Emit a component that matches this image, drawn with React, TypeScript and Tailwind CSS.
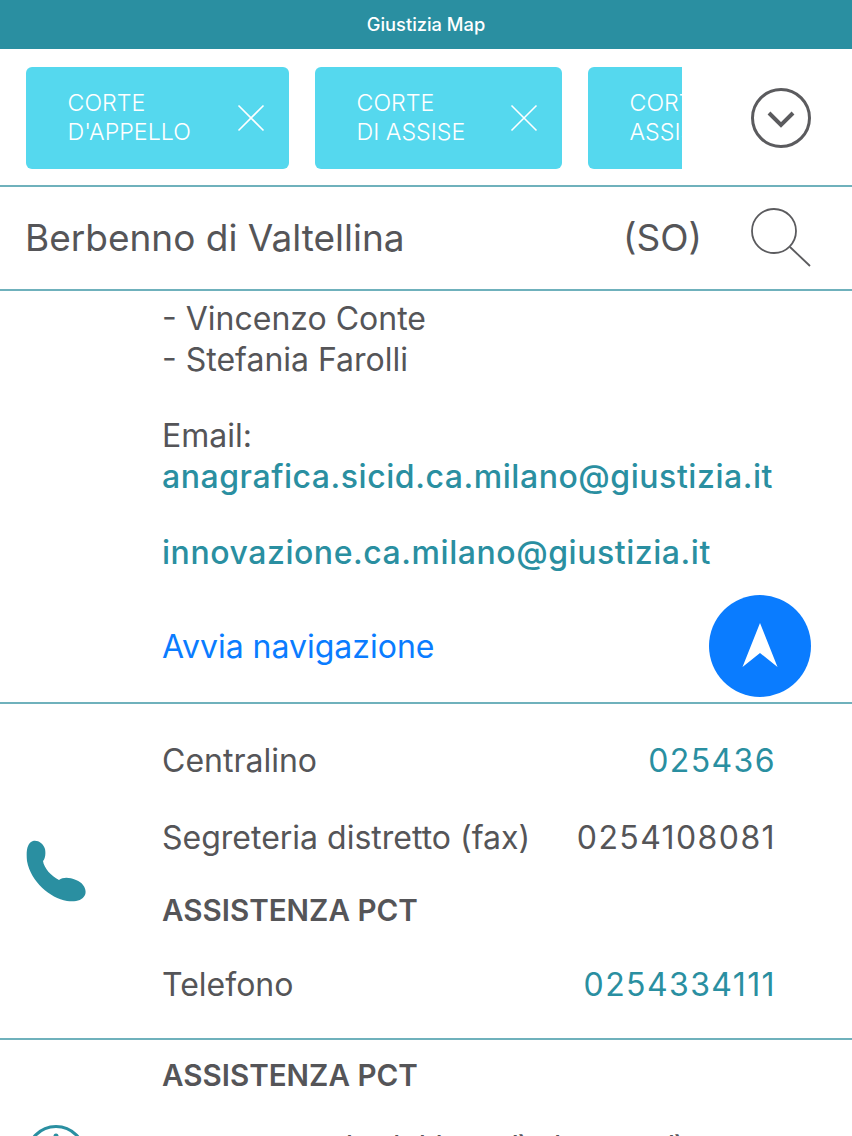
const FONT = "font-['Inter','Liberation_Sans',sans-serif]";

function Chip({ line1, line2, width }: { line1: string; line2: string; width: string }) {
  return (
    <div className={`flex h-[102px] shrink-0 items-center rounded-[6px] bg-[#55d8ee] pl-[41.5px] ${width}`}>
      <div className="flex-1 whitespace-nowrap pt-[1px] text-[23.2px] leading-[29px] font-light text-white">
        <div>{line1}</div>
        <div>{line2}</div>
      </div>
      <svg width="28" height="28" viewBox="0 0 28 28" className="mr-[24px] shrink-0" fill="none" stroke="#fff" strokeWidth="1.6">
        <path d="M1.5 1.5L26.5 26.5M26.5 1.5L1.5 26.5" />
      </svg>
    </div>
  );
}

function Row({ label, value, link }: { label: string; value: string; link?: boolean }) {
  return (
    <div className="flex items-center justify-between leading-[41px]">
      <span>{label}</span>
      <span className={`tracking-[1.4px] ${link ? "text-[#2a8fa1]" : ""}`}>{value}</span>
    </div>
  );
}

export default function App() {
  return (
    <div className={`${FONT} h-[1136px] w-[852px] overflow-hidden bg-white text-[32px] text-[#555558]`}>
      <div className="flex h-[49px] items-center justify-center bg-[#2a8fa1] text-[18.3px] font-medium text-white">Giustizia Map</div>

      <div className="flex h-[138px] items-center border-b-2 border-[#6fb1bc] pt-[1px] pl-[26px]">
        <div className="flex w-[656px] gap-[26px] overflow-hidden">
          <Chip line1="CORTE" line2="D'APPELLO" width="w-[263px]" />
          <Chip line1="CORTE" line2="DI ASSISE" width="w-[247px]" />
          <Chip line1="CORTE" line2="ASSISE" width="w-[247px]" />
        </div>
        <svg width="60" height="60" viewBox="0 0 60 60" className="ml-[69px]" fill="none" stroke="#5b5b5e">
          <circle cx="30" cy="30" r="28.5" strokeWidth="3" />
          <path d="M18 25L30 37L42 25" strokeWidth="4" />
        </svg>
      </div>

      <div className="flex h-[104px] items-center border-b-2 border-[#6fb1bc] pl-[25px] pr-[41px] text-[37px]">
        <span className="flex-1">Berbenno di Valtellina</span>
        <span>(SO)</span>
        <svg width="60" height="60" viewBox="0 0 60 60" className="ml-[49px]" fill="none" stroke="#5b5b5e" strokeWidth="1.8">
          <circle cx="23" cy="23" r="22" />
          <path d="M39 39L59 58" />
        </svg>
      </div>

      <div className="relative flex h-[413px] flex-col border-b-2 border-[#6fb1bc] pl-[162px] pt-[7px] leading-[41px]">
        <div>- Vincenzo Conte</div>
        <div>- Stefania Farolli</div>
        <div className="mt-[35px]">Email:</div>
        <div className="font-[550] tracking-[0.55px] text-[#2a8fa1]">anagrafica.sicid.ca.milano@giustizia.it</div>
        <div className="mt-[35px] font-[550] tracking-[0.55px] text-[#2a8fa1]">innovazione.ca.milano@giustizia.it</div>
        <div className="mt-[53px] text-[#0a7cff]">Avvia navigazione</div>
        <div className="absolute right-[41px] top-[304px] flex h-[102px] w-[102px] items-center justify-center rounded-full bg-[#0a7cff]">
          <svg width="36" height="46" viewBox="0 0 36 46" fill="#fff">
            <path d="M18 0L35.5 44L18 30L0.5 44Z" />
          </svg>
        </div>
      </div>

      <div className="relative flex h-[336px] flex-col border-b-2 border-[#6fb1bc] pl-[162px] pr-[76px] pt-[36px]">
        <Row label="Centralino" value="025436" link />
        <div className="mt-[36px]">
          <Row label="Segreteria distretto (fax)" value="0254108081" />
        </div>
        <div className="mt-[32px] text-[29.6px] leading-[41px] font-semibold">ASSISTENZA PCT</div>
        <div className="mt-[33px]">
          <Row label="Telefono" value="0254334111" link />
        </div>
        <svg width="60" height="62" viewBox="0 0 60 62" className="absolute left-[26px] top-[136px]" fill="#2a8fa1">
          <path d="M7 1C12 0 17 3 19 9C20 14 19 19 17 21C18 28 25 36 33 40C37 37 43 37 50 40C58 43 61 50 59 55C56 61 49 62 41 61C24 58 5 42 1 21C0 11 1 3 7 1Z" />
        </svg>
      </div>

      <div className="relative pl-[162px] pt-[17px]">
        <div className="text-[29.6px] leading-[36px] font-semibold">ASSISTENZA PCT</div>
        <div className="mt-[34px] leading-[41px]">numero verde dal lunedì al venerdì</div>
        <svg width="60" height="60" viewBox="0 0 60 60" className="absolute left-[26px] top-[85px]" fill="none" stroke="#2a8fa1" strokeWidth="3">
          <circle cx="30" cy="30" r="28.5" />
          <circle cx="30" cy="11" r="2.5" fill="#2a8fa1" stroke="none" />
          <path d="M30 20V44" />
        </svg>
      </div>
    </div>
  );
}
